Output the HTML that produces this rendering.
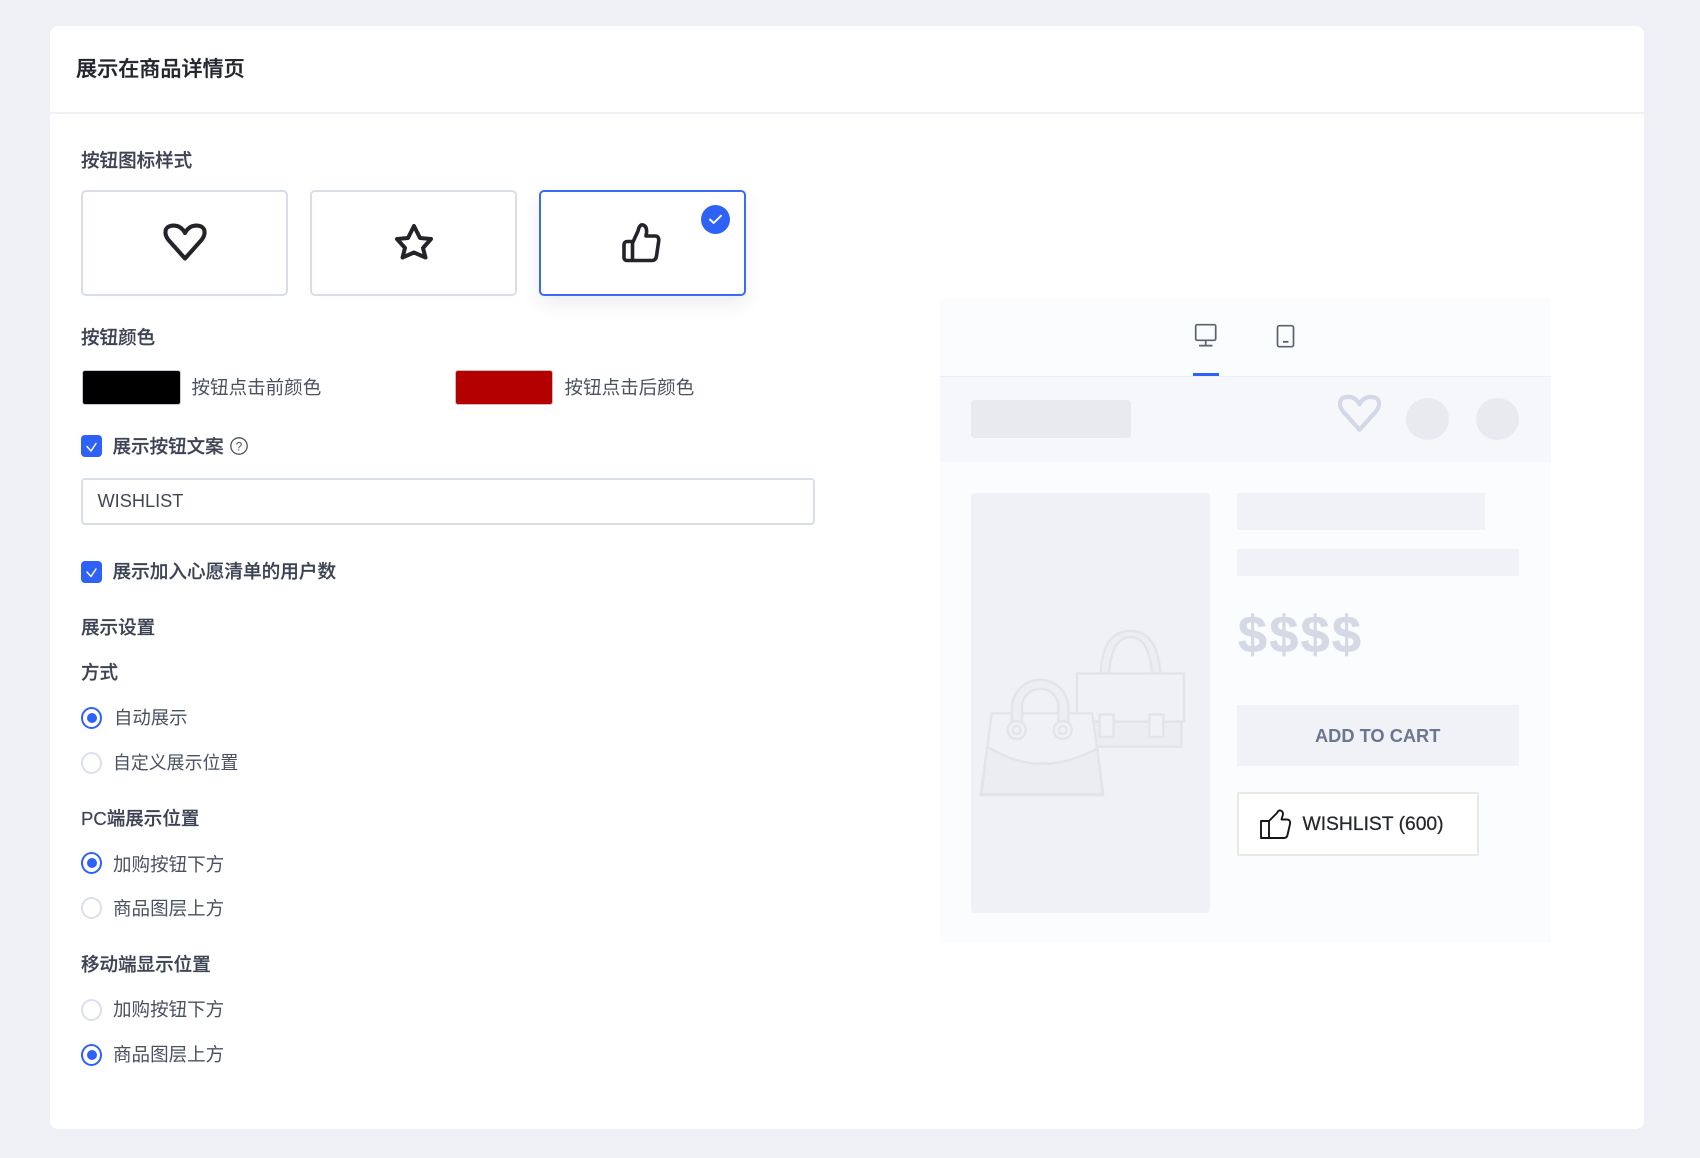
<!DOCTYPE html>
<html lang="zh-CN">
<head>
<meta charset="utf-8">
<title>展示在商品详情页</title>
<style>
html,body{margin:0;padding:0;}
body{width:1700px;height:1158px;background:#eff0f5;position:relative;overflow:hidden;font-family:"Liberation Sans","Noto Sans CJK SC",sans-serif;}
#p{position:absolute;left:0;top:0;width:1700px;height:1158px;background:#eff0f5;filter:blur(.35px);}
.a{position:absolute;box-sizing:border-box;}
.t{position:absolute;line-height:28px;height:28px;white-space:nowrap;font-size:18.55px;color:#4a5160;}
.l{font-weight:500;color:#3c4353;-webkit-text-stroke:.2px #3c4353;}
.card{position:absolute;left:50px;top:26px;width:1594px;height:1103px;background:#fff;border-radius:8px;}
.opt{position:absolute;top:190px;width:207px;height:106px;border:2px solid #d9ddea;border-radius:5px;background:#fff;box-sizing:border-box;}
.cb{position:absolute;left:81px;width:20.5px;height:22px;background:#2e62f7;border-radius:4px;}
.r{position:absolute;left:81px;width:21px;height:22px;border-radius:50%;box-sizing:border-box;border:2px solid #dcdfec;background:#fff;}
.r.on{border-color:#2e62f7;}
.r.on::after{content:"";position:absolute;left:3.5px;top:4px;width:10px;height:10px;border-radius:50%;background:#2e62f7;}
</style>
</head>
<body>
<div id="p">
<div class="card"></div>
<div class="a" style="left:50px;top:112px;width:1594px;height:1.5px;background:#eff1f6;"></div>
<div class="t" style="left:76px;top:56px;font-size:21.1px;font-weight:500;color:#23262e;-webkit-text-stroke:.35px #23262e;">展示在商品详情页</div>

<div class="t l" style="left:81px;top:147px;">按钮图标样式</div>
<div class="opt" style="left:81px;"></div>
<div class="opt" style="left:309.5px;"></div>
<div class="opt" style="left:538.5px;border:2px solid #3a6bf7;box-shadow:0 8px 18px rgba(50,60,100,.09);"></div>

<div class="t l" style="left:81px;top:324px;">按钮颜色</div>
<div class="a" style="left:82px;top:369.5px;width:98.5px;height:35px;background:#000;border-radius:3px;border:1px solid #c6cad6;"></div>
<div class="t" style="left:191.5px;top:374px;">按钮点击前颜色</div>
<div class="a" style="left:455px;top:369.5px;width:98px;height:35px;background:#b50000;border-radius:3px;border:1px solid #d2b8bc;"></div>
<div class="t" style="left:564.5px;top:374px;">按钮点击后颜色</div>

<div class="cb" style="top:435px;"></div>
<div class="t l" style="left:112.5px;top:432.5px;">展示按钮文案</div>
<div class="a" style="left:81px;top:478px;width:734px;height:47px;border:2px solid #d9ddea;border-radius:4px;background:#fff;"></div>
<div class="t" style="left:97.5px;top:487px;font-size:18.2px;color:#3f4656;">WISHLIST</div>
<div class="cb" style="top:560.5px;"></div>
<div class="t l" style="left:112.5px;top:557.5px;font-size:18.65px;">展示加入心愿清单的用户数</div>

<div class="t l" style="left:81px;top:613.5px;">展示设置</div>
<div class="t l" style="left:81px;top:658.5px;">方式</div>
<div class="r on" style="top:706.5px;"></div>
<div class="t" style="left:114px;top:703.5px;font-size:18.4px;">自动展示</div>
<div class="r" style="top:751.5px;"></div>
<div class="t" style="left:113px;top:748.5px;font-size:17.9px;">自定义展示位置</div>
<div class="t l" style="left:81px;top:804.5px;">PC端展示位置</div>
<div class="r on" style="top:852px;"></div>
<div class="t" style="left:113px;top:850.5px;">加购按钮下方</div>
<div class="r" style="top:897px;"></div>
<div class="t" style="left:113px;top:894.5px;">商品图层上方</div>
<div class="t l" style="left:81px;top:951px;">移动端显示位置</div>
<div class="r" style="top:999px;"></div>
<div class="t" style="left:113px;top:996px;">加购按钮下方</div>
<div class="r on" style="top:1043.5px;"></div>
<div class="t" style="left:113px;top:1040.5px;">商品图层上方</div>

<!-- preview panel -->
<div class="a" style="left:940px;top:298px;width:611px;height:645px;background:#fbfcfe;"></div>
<div class="a" style="left:940px;top:376px;width:611px;height:86px;background:#f6f7fb;border-top:1.5px solid #eceef4;"></div>
<div class="a" style="left:1192.5px;top:373px;width:26.5px;height:3px;background:#2e62f7;"></div>
<div class="a" style="left:971px;top:399.5px;width:159.5px;height:38.5px;background:#e8eaef;border-radius:4px;"></div>
<div class="a" style="left:1406px;top:397.5px;width:43px;height:42px;background:#e8eaef;border-radius:50%;"></div>
<div class="a" style="left:1475.5px;top:397.5px;width:43px;height:42px;background:#e8eaef;border-radius:50%;"></div>
<div class="a" style="left:971px;top:493px;width:239px;height:420px;background:#f0f1f6;border-radius:4px;"></div>
<div class="a" style="left:1236.5px;top:492.5px;width:248px;height:37px;background:#f1f2f7;"></div>
<div class="a" style="left:1236.5px;top:548.5px;width:282px;height:27px;background:#f1f2f7;"></div>
<div class="t" style="left:1238px;top:620.5px;height:28px;line-height:28px;font-size:52px;font-weight:700;color:#d5d9e6;letter-spacing:2.4px;-webkit-text-stroke:.5px #d5d9e6;">$$$$</div>
<div class="a" style="left:1236.5px;top:705px;width:282px;height:61px;background:#f1f2f7;"></div>
<div class="t" style="left:1315px;top:721.5px;font-size:18.25px;font-weight:700;color:#6b7690;">ADD TO CART</div>
<div class="a" style="left:1236.5px;top:792px;width:242.5px;height:64px;background:#fff;border:2px solid #e9e9e4;border-radius:2px;"></div>
<div class="t" style="left:1302.5px;top:811px;font-size:19.3px;color:#25272c;-webkit-text-stroke:.25px #25272c;">WISHLIST (600)</div>

<svg class="a" style="left:0;top:0;" width="1700" height="1158" viewBox="0 0 1700 1158" fill="none">
  <!-- option heart -->
  <path d="M185 258.5 L168.5 240 C164.5 235 164.5 229.5 168 227 C171.5 224.8 177 225.3 180 227.3 C182 228.7 184 230.7 185 233 C186 230.7 188 228.7 190 227.3 C193 225.3 198.5 224.8 202 227 C205.5 229.5 205.5 235 201.5 240 Z" stroke="#23242a" stroke-width="4.1" stroke-linejoin="round"/>
  <!-- option star -->
  <path d="M414 226 L420 238 L431 239 L423 248 L425.5 257.5 L414 252.5 L402.5 257.5 L405 248 L397 239 L408 238 Z" stroke="#23242a" stroke-width="4" stroke-linejoin="round"/>
  <!-- option thumb -->
  <path d="M634 241.5 H627 a3 3 0 0 0 -3 3 V257 a3 3 0 0 0 3 3.5 H652 C654.5 260.5 656 259 656.5 256 L658.7 241 C659 238 658 236 655 236 H646 L646.5 233 C647 229 646 226 643 225 C641 224.3 639 226 638 231 L632.5 243 V260" stroke="#23242a" stroke-width="3.6" stroke-linejoin="round"/>
  <!-- selected badge -->
  <ellipse cx="715.5" cy="219.5" rx="14.5" ry="14.5" fill="#2e62f7"/>
  <path d="M710 219.5 L713.7 223 L721 215.8" stroke="#fff" stroke-width="1.9" stroke-linecap="round" stroke-linejoin="round"/>
  <!-- checkboxes -->
  <path d="M87 446.5 L91 451 L96 443.5" stroke="#fff" stroke-width="1.4" stroke-linecap="round" stroke-linejoin="round"/>
  <path d="M87 572 L91 576.5 L96 569" stroke="#fff" stroke-width="1.4" stroke-linecap="round" stroke-linejoin="round"/>
  <!-- help -->
  <circle cx="239" cy="446" r="8.2" stroke="#4a5160" stroke-width="1.3"/>
  <text x="239" y="450.5" font-family="Liberation Sans, sans-serif" font-size="12" text-anchor="middle" fill="#4a5160">?</text>
  <!-- monitor -->
  <rect x="1195.7" y="324.7" width="20" height="15.6" rx="1.5" stroke="#5a6270" stroke-width="1.7"/>
  <path d="M1205.7 341 V345.5 M1199 345.6 H1212.5" stroke="#5a6270" stroke-width="1.7"/>
  <!-- tablet -->
  <rect x="1277.5" y="325.7" width="16" height="21" rx="2" stroke="#5a6270" stroke-width="1.7"/>
  <path d="M1283 341.8 H1288.5" stroke="#5a6270" stroke-width="1.8"/>
  <!-- preview heart -->
  <path transform="translate(1174.5 171.3)" d="M185 258.5 L168.5 240 C164.5 235 164.5 229.5 168 227 C171.5 224.8 177 225.3 180 227.3 C182 228.7 184 230.7 185 233 C186 230.7 188 228.7 190 227.3 C193 225.3 198.5 224.8 202 227 C205.5 229.5 205.5 235 201.5 240 Z" stroke="#d3d8e6" stroke-width="4.2" stroke-linejoin="round"/>
  <!-- back bag -->
  <path d="M1100.5 673 C1102 645 1112 631 1130.5 631 C1149 631 1158 645 1160.5 673 H1152 C1150 650 1143 637 1130.5 637 C1118 637 1111 650 1109 673 Z" fill="#edeef3" stroke="#e2e4ea" stroke-width="2.4"/>
  <rect x="1090" y="721.7" width="91.5" height="25" fill="#ecedf2" stroke="#e2e4ea" stroke-width="2.4"/>
  <rect x="1077" y="673.5" width="107" height="48" fill="#f0f1f6" stroke="#e2e4ea" stroke-width="2.4"/>
  <rect x="1099.5" y="714.5" width="14" height="22.5" fill="#f0f1f6" stroke="#e2e4ea" stroke-width="2.4"/>
  <rect x="1149.3" y="714.5" width="14" height="22.5" fill="#f0f1f6" stroke="#e2e4ea" stroke-width="2.4"/>
  <!-- front bag -->
  <path d="M991.7 713.3 H1092.3 L1103.3 795 H980.7 Z" fill="#f0f1f6" stroke="#e2e4ea" stroke-width="2.4" stroke-linejoin="round"/>
  <path d="M987.3 746.7 Q1040 780 1097.3 748.3 L1102.5 794 H981.5 Z" fill="#ecedf2" stroke="#e2e4ea" stroke-width="2.4" stroke-linejoin="round"/>
  <path d="M1012 726 V708 a28.2 28.2 0 0 1 56.4 0 V726 H1058.4 V707 a18.2 18.2 0 0 0 -36.4 0 V726 Z" fill="#edeef3" stroke="#e2e4ea" stroke-width="2.4"/>
  <circle cx="1016.7" cy="730" r="9" fill="#f0f1f6" stroke="#e2e4ea" stroke-width="2.4"/>
  <circle cx="1016.7" cy="730" r="4" stroke="#e2e4ea" stroke-width="2.4"/>
  <circle cx="1062.7" cy="730" r="9" fill="#f0f1f6" stroke="#e2e4ea" stroke-width="2.4"/>
  <circle cx="1062.7" cy="730" r="4" stroke="#e2e4ea" stroke-width="2.4"/>
  <!-- wishlist thumb -->
  <path d="M1261 821 H1269 V838 H1261 Z M1269 821 L1277 813 C1278 811 1279 810 1280.5 810.5 C1283 811 1283.5 814 1282.5 816 L1281.5 819.5 H1287 C1289.5 819.5 1290.5 821.5 1290 824 L1287.5 835 C1287 837 1286 838 1284 838 H1269" stroke="#15161a" stroke-width="1.9" stroke-linejoin="round"/>
</svg>
</div>
</body>
</html>
